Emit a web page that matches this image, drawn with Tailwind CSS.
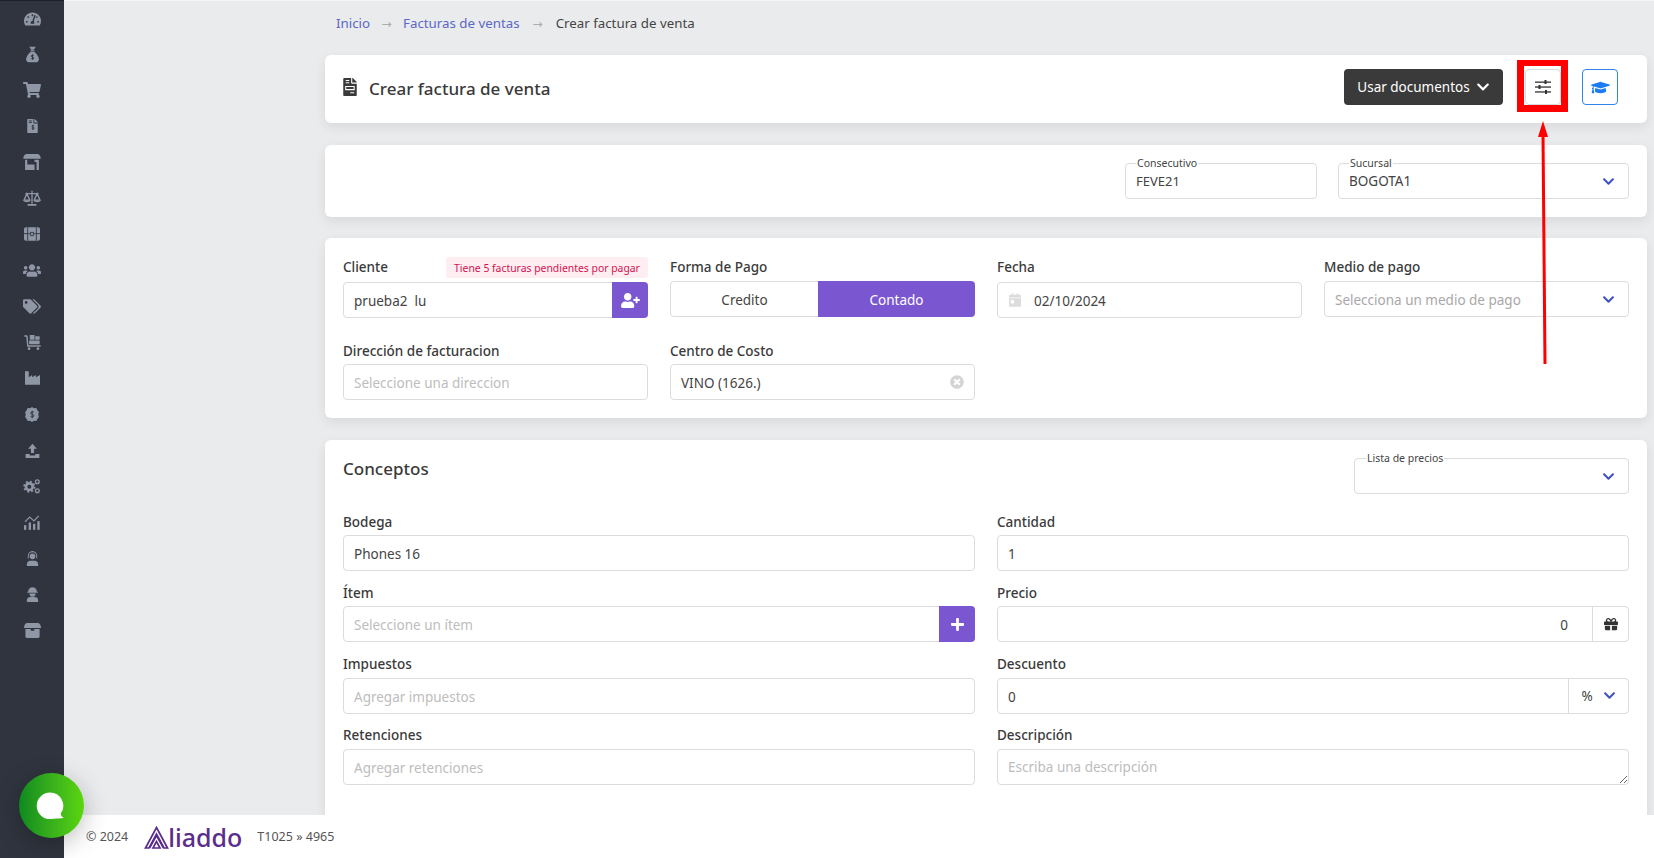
<!DOCTYPE html>
<html lang="es">
<head>
  <meta charset="UTF-8">
  <title>Crear factura de venta</title>
  <script src="https://cdn.jsdelivr.net/npm/@tailwindcss/browser@4"></script>
</head>
<body class="relative h-screen overflow-hidden flex bg-[#eaebed] text-[13.5px] text-[#444] font-['Noto_Sans',sans-serif]">

  <!-- sidebar -->
  <aside class="w-[64px] shrink-0 h-full bg-[#2f343e] text-[#8f97a6] border-t border-[#1d2027]">
    <div class="h-[35px] flex items-center justify-center"><svg class="w-[17px] h-[16px]" viewBox="0 0 576 512" fill="currentColor"><path d="M288 32C128.94 32 0 160.94 0 320c0 52.8 14.25 102.26 39.06 144.8 5.61 9.62 16.3 15.2 27.44 15.2h443c11.14 0 21.83-5.58 27.44-15.2C561.75 422.26 576 372.8 576 320c0-159.06-128.94-288-288-288zm0 64c14.71 0 26.58 10.13 30.32 23.65-1.11 2.26-2.64 4.23-3.45 6.67l-9.22 27.67c-5.13 3.49-10.97 6.01-17.64 6.01-17.67 0-32-14.33-32-32S270.33 96 288 96zM96 384c-17.67 0-32-14.33-32-32s14.33-32 32-32 32 14.33 32 32-14.33 32-32 32zm48-160c-17.67 0-32-14.33-32-32s14.33-32 32-32 32 14.33 32 32-14.33 32-32 32zm246.77-72.41l-61.33 184C343.13 347.33 352 364.54 352 384c0 11.72-3.38 22.55-8.88 32H232.88c-5.5-9.45-8.88-20.28-8.88-32 0-33.94 26.5-61.43 59.9-63.59l61.34-184.01c4.17-12.56 17.73-19.45 30.36-15.17 12.57 4.19 19.35 17.79 15.17 30.36zm14.66 57.2l15.52-46.55c3.47-1.29 7.13-2.23 11.05-2.23 17.67 0 32 14.33 32 32s-14.33 32-32 32c-11.38-.01-20.89-6.28-26.57-15.22zM480 384c-17.67 0-32-14.33-32-32s14.33-32 32-32 32 14.33 32 32-14.33 32-32 32z"/></svg></div>
    <div class="h-9 flex items-center justify-center"><svg class="w-[17px] h-[17px]" viewBox="0 0 24 24" fill="currentColor"><path d="M7.5 1h9l-2.6 4.2h-3.8z"/><rect x="9" y="6" width="6" height="1.6" rx=".6"/><path d="M9.6 8.6h4.8c3.2 2 6.6 6.6 6.6 10 0 2.9-2 4.4-4.4 4.4H7.4C5 23 3 21.500 3 18.600c0-3.400 3.400-8 6.600-10z"/><path d="M14 13.500c-.6-.8-3.800-1-3.800.8s3.800 1 3.800 2.800-3.300 1.500-4 .6M12 12v7.500" fill="none" stroke="#2f343e" stroke-width="1.300"/></svg></div>
    <div class="h-9 flex items-center justify-center"><svg class="w-[18px] h-[16px]" viewBox="0 0 576 512" fill="currentColor"><path d="M528.12 301.319l47.273-208C578.806 78.301 567.391 64 551.99 64H159.208l-9.166-44.81C147.758 8.021 137.93 0 126.529 0H24C10.745 0 0 10.745 0 24v16c0 13.255 10.745 24 24 24h69.883l70.248 343.435C147.325 417.1 136 435.222 136 456c0 30.928 25.072 56 56 56s56-25.072 56-56c0-15.674-6.447-29.835-16.824-40h209.647C430.447 426.165 424 440.326 424 456c0 30.928 25.072 56 56 56s56-25.072 56-56c0-22.172-12.888-41.332-31.579-50.405l5.517-24.276c3.413-15.018-8.002-29.319-23.403-29.319H218.117l-6.545-32h293.145c11.206 0 20.92-7.754 23.403-18.681z"/></svg></div>
    <div class="h-9 flex items-center justify-center"><svg class="w-[11px] h-[14px]" viewBox="0 0 384 512" fill="currentColor"><path d="M377 105L279.1 7c-4.500-4.500-10.600-7-17-7H256v128h128v-6.100c0-6.300-2.500-12.400-7-16.900zM224 136V0H24C10.700 0 0 10.700 0 24v464c0 13.300 10.700 24 24 24h336c13.300 0 24-10.700 24-24V160H248c-13.200 0-24-10.800-24-24z"/><path d="M256 250c-25-18-85-18-85 20s85 22 85 62-70 36-92 14M205 215v190M60 70h110M60 130h110" fill="none" stroke="#2f343e" stroke-width="32"/></svg></div>
    <div class="h-9 flex items-center justify-center"><svg class="w-[18px] h-[16px]" viewBox="0 0 24 22" fill="currentColor"><path d="M4 0h16c2 0 4 3 4 6.500H0C0 3 2 0 4 0z"/><path d="M2.500 8h3v6.500h10V8h6v14h-3.200V11h-2.800v11H2.500zM5.500 17h10v2.800h-10z"/></svg></div>
    <div class="h-9 flex items-center justify-center"><svg class="w-[18px] h-[16px]" viewBox="0 0 24 22" fill="none" stroke="currentColor" stroke-width="1.800"><path d="M12 1v18M3 5h18M5 5l-4 9h8zM19 5l-4 9h8z"/><path d="M0 14.500c1 3 9 3 10 0zM14 14.500c1 3 9 3 10 0z" fill="currentColor" stroke="none"/><path d="M6 20.500h12" stroke-width="2.500"/></svg></div>
    <div class="h-9 flex items-center justify-center"><svg class="w-[16px] h-[14px]" viewBox="0 0 24 20" fill="currentColor"><path d="M3 0h18c1.700 0 3 1.300 3 3v14c0 1.700-1.300 3-3 3H3c-1.700 0-3-1.300-3-3V3c0-1.700 1.300-3 3-3z"/><path d="M5.500 0v20M18.500 0v20M0 9.500h9.500M14.500 9.500H24" fill="none" stroke="#2f343e" stroke-width="1.300"/><rect x="10" y="7.500" width="4" height="5" fill="none" stroke="#2f343e" stroke-width="1.200"/></svg></div>
    <div class="h-9 flex items-center justify-center"><svg class="w-[18px] h-[15px]" viewBox="0 0 640 512" fill="currentColor"><path d="M96 224c35.300 0 64-28.700 64-64s-28.700-64-64-64-64 28.700-64 64 28.700 64 64 64zm448 0c35.300 0 64-28.700 64-64s-28.700-64-64-64-64 28.700-64 64 28.700 64 64 64zm32 32h-64c-17.600 0-33.500 7.100-45.100 18.600 40.300 22.100 68.900 62 75.100 109.400h66c17.700 0 32-14.300 32-32v-32c0-35.300-28.700-64-64-64zm-256 0c61.900 0 112-50.100 112-112S381.900 32 320 32 208 82.100 208 144s50.100 112 112 112zm76.800 32h-8.300c-20.800 10-43.900 16-68.500 16s-47.600-6-68.500-16h-8.300C179.600 288 128 339.600 128 403.200V432c0 26.500 21.500 48 48 48h288c26.500 0 48-21.500 48-48v-28.800c0-63.600-51.600-115.200-115.200-115.200zm-223.700-13.400C161.500 263.100 145.600 256 128 256H64c-35.300 0-64 28.700-64 64v32c0 17.700 14.300 32 32 32h65.900c6.300-47.400 34.900-87.300 75.200-109.400z"/></svg></div>
    <div class="h-9 flex items-center justify-center"><svg class="w-[18px] h-[15px]" viewBox="0 0 640 512" fill="currentColor"><path d="M497.941 225.941L286.059 14.059A48 48 0 0 0 252.118 0H48C21.490 0 0 21.490 0 48v204.118a48 48 0 0 0 14.059 33.941l211.882 211.882c18.744 18.745 49.136 18.746 67.882 0l204.118-204.118c18.745-18.745 18.745-49.137 0-67.882zM112 160c-26.510 0-48-21.490-48-48s21.490-48 48-48 48 21.490 48 48-21.490 48-48 48zm513.941 133.823L421.823 497.941c-18.745 18.745-49.137 18.745-67.882 0l-.36-.36L527.640 323.522c16.999-16.999 26.360-39.600 26.360-63.640s-9.362-46.641-26.360-63.640L331.397 0h48.721a48 48 0 0 1 33.941 14.059l211.882 211.882c18.745 18.745 18.745 49.137 0 67.882z"/></svg></div>
    <div class="h-9 flex items-center justify-center"><svg class="w-[17px] h-[15px]" viewBox="0 0 24 22" fill="currentColor"><path d="M0 .5h3.500c.8 0 1.300.5 1.500 1.200L6 15h18v2.200H4.200L2.800 2.700H0z"/><rect x="8" y="0" width="7" height="7" rx=".6"/><rect x="16" y="2" width="6.500" height="5" rx=".6"/><rect x="7" y="8" width="15.500" height="5.500" rx=".6"/><circle cx="7" cy="20" r="2"/><circle cx="20" cy="20" r="2"/></svg></div>
    <div class="h-9 flex items-center justify-center"><svg class="w-[15px] h-[14px]" viewBox="0 0 22 20" fill="currentColor"><path d="M0 0h5.500v9l5-3.500V9l5.500-3.500V9L22 5.500V20H0z"/></svg></div>
    <div class="h-9 flex items-center justify-center"><svg class="w-[14px] h-[15px]" viewBox="0 0 22 24" fill="currentColor"><path d="M11 0l3 2 4-.5 1.500 3.500 2.500 3-1 4 1 4-2.500 3-1.500 3.500-4-.5-3 2-3-2-4 .5L2.500 19 0 16l1-4-1-4 2.500-3L4 1.500 8 2z"/><path d="M14 8.500c-.7-1.300-5-1.500-5 1.200 0 2.700 5 1.500 5 4.300 0 2.600-4.400 2.300-5.300.9M11.300 6v12" fill="none" stroke="#2f343e" stroke-width="1.500"/></svg></div>
    <div class="h-9 flex items-center justify-center"><svg class="w-[15px] h-[15px]" viewBox="0 0 24 24" fill="currentColor"><path d="M12 1l7 8h-4.500v7h-5V9H5z"/><path d="M1 17.500h6.500v1.500c0 .6.500 1 1 1h7c.6 0 1-.4 1-1v-1.500H23V24H1z"/></svg></div>
    <div class="h-9 flex items-center justify-center"><svg class="w-[18px] h-[16px]" viewBox="0 0 26 24" fill="none" stroke="currentColor"><circle cx="9" cy="13" r="5" stroke-width="4"/><circle cx="9" cy="13" r="7.800" stroke-width="2.600" stroke-dasharray="3 3.100"/><circle cx="21" cy="5.500" r="2.800" stroke-width="2"/><circle cx="21" cy="19" r="2.800" stroke-width="2"/></svg></div>
    <div class="h-9 flex items-center justify-center"><svg class="w-[16px] h-[15px]" viewBox="0 0 24 22" fill="currentColor"><rect x="0" y="15" width="3.500" height="7"/><rect x="7" y="11" width="3.500" height="11"/><rect x="13.500" y="13" width="3.500" height="9"/><rect x="20" y="9" width="3.500" height="13"/><path d="M1.500 10L8.500 3l6.500 5.500L22 1" fill="none" stroke="currentColor" stroke-width="1.800"/></svg></div>
    <div class="h-9 flex items-center justify-center"><svg class="w-[13px] h-[15px]" viewBox="0 0 20 24" fill="currentColor"><path d="M10 0a8 8 0 0 1 7.500 8v4h-1.500V8A6 6 0 0 0 4 8v4H2.500V8A8 8 0 0 1 10 0z"/><circle cx="10" cy="8.500" r="4.500"/><path d="M1 24v-3c0-3 2.500-5.500 5.500-5.500h7c3 0 5.500 2.500 5.500 5.500v3z"/></svg></div>
    <div class="h-9 flex items-center justify-center"><svg class="w-[13px] h-[15px]" viewBox="0 0 20 24" fill="currentColor"><path d="M3 7.500a7 7 0 0 1 14 0h1.500v1.700h-17V7.500z"/><path d="M5 10.500h10a5 5 0 0 1-10 0z"/><path d="M1 24v-3c0-3 2.500-5 5.500-5h7c3 0 5.500 2 5.500 5v3z"/></svg></div>
    <div class="h-9 flex items-center justify-center"><svg class="w-[17px] h-[15px]" viewBox="0 0 24 21" fill="currentColor"><path d="M4 0h16c2 0 4 3 4 7H0C0 3 2 0 4 0z"/><path d="M2 8.500h7.500v2.500h5V8.500H22V19c0 1.200-.8 2-2 2H4c-1.200 0-2-.8-2-2z"/></svg></div>
  </aside>

  <main class="flex-1 min-w-0 h-full flex flex-col">
    <div class="flex-1 min-h-0 overflow-hidden pl-[261px] pr-[7px] border-t border-[#f5f5f6]">
      <!-- breadcrumb -->
      <nav class="h-[45px] mb-[9px] flex items-center text-[13.3px]">
        <a class="text-[#5a68c6] ml-[11px]">Inicio</a>
        <span class="text-[#a9abb0] mx-[11.5px] text-[12px] font-['DejaVu_Sans',sans-serif]">→</span>
        <a class="text-[#5a68c6]">Facturas de ventas</a>
        <span class="text-[#a9abb0] mx-[13px] text-[12px] font-['DejaVu_Sans',sans-serif]">→</span>
        <span class="text-[#444]">Crear factura de venta</span>
      </nav>

      <!-- title card -->
      <section class="h-[68px] bg-white rounded-[6px] shadow-[0_4px_12px_rgba(0,0,0,0.08)] pl-[18px] pr-[29px] flex items-center justify-between">
        <div class="flex items-center">
          <svg class="w-[14px] h-[18px] mr-[12px] mb-[4px]" viewBox="0 0 384 512" fill="#3a3a3a"><path d="M377 105L279.100 7c-4.500-4.500-10.600-7-17-7H256v128h128v-6.100c0-6.300-2.500-12.400-7-16.900zM224 136V0H24C10.700 0 0 10.700 0 24v464c0 13.300 10.700 24 24 24h336c13.300 0 24-10.700 24-24V160H248c-13.200 0-24-10.800-24-24z"/><path d="M70 70h100M70 135h100M70 240h240v90H70zM200 420h110" fill="none" stroke="#fff" stroke-width="30"/></svg>
          <h1 class="text-[17px] font-medium text-[#3a3a3a]">Crear factura de venta</h1>
        </div>
        <div class="flex items-center mb-[4px]">
          <button class="w-[159px] h-[36px] rounded-[4px] bg-[#3a3a3a] text-white flex items-center justify-center gap-[6px]">Usar documentos
            <svg class="w-[14px] h-[14px]" viewBox="0 0 448 512" fill="currentColor"><path d="M207.029 381.476L12.686 187.132c-9.373-9.373-9.373-24.569 0-33.941l22.667-22.667c9.357-9.357 24.522-9.375 33.901-.04L224 284.505l154.745-154.021c9.379-9.335 24.544-9.317 33.901.04l22.667 22.667c9.373 9.373 9.373 24.569 0 33.941L240.971 381.476c-9.373 9.372-24.569 9.372-33.942 0z"/></svg>
          </button>
          <div class="relative ml-[22px]">
            <button class="w-[36px] h-[36px] rounded-[4px] border border-[#d9d9d9] bg-white flex items-center justify-center">
              <svg class="w-[16px] h-[14px]" viewBox="0 0 16 14" fill="#333"><rect x="0" y="1.500" width="16" height="1.300"/><rect x="9.500" y="0" width="2" height="4"/><rect x="0" y="6.400" width="16" height="1.300"/><rect x="3.500" y="5" width="2" height="4"/><rect x="0" y="11.300" width="16" height="1.300"/><rect x="10" y="10" width="2" height="4"/></svg>
            </button>
            <div class="absolute -left-[8px] -top-[9px] w-[51px] h-[52px] border-x-[7px] border-t-[6px] border-b-[7px] border-[#f00]"></div>
          </div>
          <button class="ml-[21px] w-[36px] h-[36px] rounded-[4px] border border-[#2b86f0] bg-white flex items-center justify-center">
            <svg class="w-[19px] h-[15px]" viewBox="0 0 640 512" fill="#1d7cf2"><path d="M622.340 153.200L343.400 67.500c-15.200-4.670-31.600-4.670-46.790 0L17.660 153.200c-23.540 7.230-23.540 38.360 0 45.590l48.630 14.940c-10.670 13.190-17.230 29.280-17.880 46.900C38.780 266.150 32 276.110 32 288c0 10.780 5.680 19.850 13.860 25.650L20.330 428.530C18.110 438.520 25.710 448 35.940 448h56.110c10.240 0 17.840-9.480 15.620-19.470L82.140 313.650C90.320 307.850 96 298.780 96 288c0-11.570-6.470-21.250-15.660-26.870.76-15.020 8.440-28.300 20.690-36.720L296.600 284.500c9.060 2.780 26.440 6.250 46.790 0l278.950-85.700c23.550-7.240 23.550-38.360 0-45.600zM352.790 315.090c-28.530 8.760-52.840 3.920-65.590 0l-145.020-44.550L128 384c0 35.350 85.960 64 192 64s192-28.650 192-64l-14.180-113.470-145.030 44.560z"/></svg>
          </button>
        </div>
      </section>

      <!-- consecutivo / sucursal -->
      <section class="mt-[22px] h-[72px] bg-white rounded-[6px] shadow-[0_4px_12px_rgba(0,0,0,0.08)] px-[18px] flex items-center justify-end gap-[21px]">
        <div class="relative w-[192px] h-[36px] rounded-[4px] border border-[#dcdcdc] flex items-center px-[10px]">
          <span class="absolute left-[10px] -top-[8px] bg-white px-[1px] text-[10.5px] leading-[14px] text-[#444]">Consecutivo</span>
          <span class="text-[13px] mt-[1px]">FEVE21</span>
        </div>
        <div class="relative w-[291px] h-[36px] rounded-[4px] border border-[#dcdcdc] flex items-center justify-between pl-[10px] pr-[13px]">
          <span class="absolute left-[10px] -top-[8px] bg-white px-[1px] text-[10.5px] leading-[14px] text-[#444]">Sucursal</span>
          <span>BOGOTA1</span>
          <svg class="w-[13px] h-[13px] text-[#3f51c5]" viewBox="0 0 448 512" fill="currentColor"><path d="M207.029 381.476L12.686 187.132c-9.373-9.373-9.373-24.569 0-33.941l22.667-22.667c9.357-9.357 24.522-9.375 33.901-.04L224 284.505l154.745-154.021c9.379-9.335 24.544-9.317 33.901.04l22.667 22.667c9.373 9.373 9.373 24.569 0 33.941L240.971 381.476c-9.373 9.372-24.569 9.372-33.942 0z"/></svg>
        </div>
      </section>

      <!-- cliente -->
      <section class="mt-[21px] h-[180px] bg-white rounded-[6px] shadow-[0_4px_12px_rgba(0,0,0,0.08)] px-[18px] pt-[19px]">
        <div class="grid grid-cols-4 gap-x-[22px]">
          <div>
            <div class="relative h-[20px] mb-[5px] leading-[20px] font-medium text-[#3a3a3a]">Cliente
              <span class="absolute right-0 top-0 h-[21px] w-[202px] rounded-[3px] bg-[#feeef2] text-[#d5124f] text-[10.4px] font-normal flex items-center justify-center">Tiene 5 facturas pendientes por pagar</span>
            </div>
            <div class="h-[36px] flex rounded-[4px] border border-[#dcdcdc]">
              <input class="flex-1 min-w-0 px-[10px] pt-[2px] outline-none" value="prueba2&nbsp; lu">
              <button class="w-[36px] -my-px -mr-px rounded-r-[4px] bg-[#7a57d1] flex items-center justify-center"><svg class="w-[19px] h-[15px]" viewBox="0 0 640 512" fill="#fff"><path d="M624 208h-64v-64c0-8.800-7.200-16-16-16h-32c-8.800 0-16 7.200-16 16v64h-64c-8.800 0-16 7.200-16 16v32c0 8.800 7.200 16 16 16h64v64c0 8.800 7.200 16 16 16h32c8.800 0 16-7.200 16-16v-64h64c8.800 0 16-7.200 16-16v-32c0-8.800-7.200-16-16-16zm-400 48c70.700 0 128-57.300 128-128S294.700 0 224 0 96 57.300 96 128s57.300 128 128 128zm89.600 32h-16.700c-22.200 10.200-46.900 16-72.900 16s-50.600-5.800-72.900-16h-16.700C60.200 288 0 348.200 0 422.400V464c0 26.500 21.500 48 48 48h352c26.500 0 48-21.500 48-48v-41.600c0-74.200-60.200-134.400-134.400-134.400z"/></svg></button>
            </div>
          </div>
          <div>
            <div class="h-[20px] mb-[4px] leading-[20px] font-medium text-[#3a3a3a]">Forma de Pago</div>
            <div class="h-[36px] flex rounded-[4px] overflow-hidden">
              <div class="w-[148px] border border-r-0 border-[#dcdcdc] rounded-l-[4px] pt-[2px] flex items-center justify-center">Credito</div>
              <div class="flex-1 bg-[#7a57d1] text-white pt-[2px] flex items-center justify-center">Contado</div>
            </div>
          </div>
          <div>
            <div class="h-[20px] mb-[5px] leading-[20px] font-medium text-[#3a3a3a]">Fecha</div>
            <div class="h-[36px] flex items-center rounded-[4px] border border-[#dcdcdc] pl-[11px]">
              <svg class="w-[12px] h-[14px] mr-[13px]" viewBox="0 0 448 512" fill="#dcdcdc"><path d="M0 464c0 26.500 21.500 48 48 48h352c26.500 0 48-21.500 48-48V192H0v272zm64-192c0-8.800 7.200-16 16-16h96c8.800 0 16 7.200 16 16v96c0 8.800-7.200 16-16 16H80c-8.800 0-16-7.200-16-16v-96zM400 64h-48V16c0-8.800-7.200-16-16-16h-32c-8.800 0-16 7.200-16 16v48H160V16c0-8.800-7.200-16-16-16h-32c-8.800 0-16 7.200-16 16v48H48C21.500 64 0 85.500 0 112v48h448v-48c0-26.500-21.500-48-48-48z"/></svg>
              <input class="flex-1 min-w-0 pt-[2px] outline-none" value="02/10/2024">
            </div>
          </div>
          <div>
            <div class="h-[20px] mb-[4px] leading-[20px] font-medium text-[#3a3a3a]">Medio de pago</div>
            <div class="h-[36px] flex items-center justify-between rounded-[4px] border border-[#dcdcdc] pl-[10px] pr-[13px] text-[#a8a8a8]"><span class="mt-[2px]">Selecciona un medio de pago</span>
              <svg class="w-[13px] h-[13px] text-[#3f51c5]" viewBox="0 0 448 512" fill="currentColor"><path d="M207.029 381.476L12.686 187.132c-9.373-9.373-9.373-24.569 0-33.941l22.667-22.667c9.357-9.357 24.522-9.375 33.901-.04L224 284.505l154.745-154.021c9.379-9.335 24.544-9.317 33.901.04l22.667 22.667c9.373 9.373 9.373 24.569 0 33.941L240.971 381.476c-9.373 9.372-24.569 9.372-33.942 0z"/></svg>
            </div>
          </div>
        </div>
        <div class="mt-[23px] grid grid-cols-4 gap-x-[22px]">
          <div>
            <div class="h-[20px] mb-[3px] leading-[20px] font-medium text-[#3a3a3a]">Dirección de facturacion</div>
            <input class="w-full h-[36px] rounded-[4px] border border-[#dcdcdc] px-[10px] pt-[2px] outline-none placeholder:text-[#bdbdbd]" placeholder="Seleccione una direccion">
          </div>
          <div>
            <div class="h-[20px] mb-[3px] leading-[20px] font-medium text-[#3a3a3a]">Centro de Costo</div>
            <div class="h-[36px] flex items-center rounded-[4px] border border-[#dcdcdc] pl-[10px] pr-[10px]">
              <input class="flex-1 min-w-0 pt-[2px] outline-none" value="VINO (1626.)">
              <svg class="w-[14px] h-[14px]" viewBox="0 0 512 512" fill="#d4d4d4"><path d="M256 8C119 8 8 119 8 256s111 248 248 248 248-111 248-248S393 8 256 8zm121.600 313.100c4.700 4.700 4.700 12.300 0 17L338 377.600c-4.700 4.700-12.300 4.700-17 0L256 312l-65.100 65.600c-4.700 4.700-12.300 4.700-17 0L134.400 338c-4.700-4.700-4.700-12.300 0-17l65.600-65-65.600-65.100c-4.700-4.700-4.700-12.300 0-17l39.600-39.600c4.700-4.700 12.300-4.700 17 0l65 65.700 65.100-65.600c4.700-4.700 12.300-4.700 17 0l39.600 39.600c4.700 4.700 4.700 12.300 0 17L312 256l65.600 65.100z"/></svg>
            </div>
          </div>
        </div>
      </section>

      <!-- conceptos -->
      <section class="mt-[22px] h-[500px] bg-white rounded-[6px] shadow-[0_4px_12px_rgba(0,0,0,0.08)] px-[18px] pt-[18px]">
        <div class="flex justify-between">
          <h2 class="text-[17px] font-medium text-[#3a3a3a] leading-[22px]">Conceptos</h2>
          <div class="relative w-[275px] h-[36px] rounded-[4px] border border-[#dcdcdc] flex items-center justify-end pr-[13px]">
            <span class="absolute left-[11px] -top-[8px] bg-white px-[1px] text-[10.5px] leading-[14px] text-[#444]">Lista de precios</span>
            <svg class="w-[13px] h-[13px] text-[#3f51c5]" viewBox="0 0 448 512" fill="currentColor"><path d="M207.029 381.476L12.686 187.132c-9.373-9.373-9.373-24.569 0-33.941l22.667-22.667c9.357-9.357 24.522-9.375 33.901-.04L224 284.505l154.745-154.021c9.379-9.335 24.544-9.317 33.901.04l22.667 22.667c9.373 9.373 9.373 24.569 0 33.941L240.971 381.476c-9.373 9.372-24.569 9.372-33.942 0z"/></svg>
          </div>
        </div>
        <div class="mt-[18px] grid grid-cols-2 gap-x-[22px] gap-y-[12.33px]">
          <div>
            <div class="h-[20px] mb-[3px] leading-[20px] font-medium text-[#3a3a3a]">Bodega</div>
            <input class="w-full h-[36px] rounded-[4px] border border-[#dcdcdc] px-[10px] pt-[2px] outline-none" value="Phones 16">
          </div>
          <div>
            <div class="h-[20px] mb-[3px] leading-[20px] font-medium text-[#3a3a3a]">Cantidad</div>
            <input class="w-full h-[36px] rounded-[4px] border border-[#dcdcdc] px-[10px] pt-[2px] outline-none" value="1">
          </div>
          <div>
            <div class="h-[20px] mb-[3px] leading-[20px] font-medium text-[#3a3a3a]">Ítem</div>
            <div class="h-[36px] flex rounded-[4px] border border-[#dcdcdc]">
              <input class="flex-1 min-w-0 px-[10px] pt-[2px] outline-none placeholder:text-[#bdbdbd]" placeholder="Seleccione un ítem">
              <button class="w-[36px] -my-px -mr-px rounded-r-[4px] bg-[#7a57d1] flex items-center justify-center"><svg class="w-[13px] h-[15px]" viewBox="0 0 448 512" fill="#fff"><path d="M416 208H272V64c0-17.670-14.330-32-32-32h-32c-17.670 0-32 14.330-32 32v144H32c-17.670 0-32 14.330-32 32v32c0 17.670 14.330 32 32 32h144v144c0 17.670 14.330 32 32 32h32c17.670 0 32-14.330 32-32V304h144c17.670 0 32-14.330 32-32v-32c0-17.670-14.330-32-32-32z"/></svg></button>
            </div>
          </div>
          <div>
            <div class="h-[20px] mb-[3px] leading-[20px] font-medium text-[#3a3a3a]">Precio</div>
            <div class="h-[36px] flex rounded-[4px] border border-[#dcdcdc]">
              <input class="flex-1 min-w-0 px-[24px] pt-[2px] text-right outline-none" value="0">
              <div class="w-[36px] border-l border-[#dcdcdc] flex items-center justify-center"><svg class="w-[14px] h-[14px]" viewBox="0 0 512 512" fill="#333"><path d="M32 448c0 17.700 14.300 32 32 32h160V320H32v128zm256 32h160c17.700 0 32-14.300 32-32V320H288v160zm192-320h-42.100c6.200-12.100 10.100-25.500 10.100-40 0-48.500-39.500-88-88-88-41.600 0-68.500 21.300-103 68.300-34.500-47-61.400-68.300-103-68.300-48.500 0-88 39.500-88 88 0 14.500 3.800 27.900 10.100 40H32c-17.700 0-32 14.300-32 32v80c0 8.800 7.200 16 16 16h480c8.800 0 16-7.200 16-16v-80c0-17.700-14.300-32-32-32zm-326.100 0c-22.100 0-40-17.900-40-40s17.900-40 40-40c19.900 0 34.600 3.300 86.100 80h-86.100zm206.100 0h-86.100c51.400-76.500 65.700-80 86.100-80 22.100 0 40 17.900 40 40s-17.900 40-40 40z"/></svg></div>
            </div>
          </div>
          <div>
            <div class="h-[20px] mb-[3px] leading-[18px] font-medium text-[#3a3a3a]">Impuestos</div>
            <input class="w-full h-[36px] rounded-[4px] border border-[#dcdcdc] px-[10px] pt-[2px] outline-none placeholder:text-[#bdbdbd]" placeholder="Agregar impuestos">
          </div>
          <div>
            <div class="h-[20px] mb-[3px] leading-[18px] font-medium text-[#3a3a3a]">Descuento</div>
            <div class="h-[36px] flex rounded-[4px] border border-[#dcdcdc]">
              <input class="flex-1 min-w-0 px-[10px] pt-[2px] outline-none" value="0">
              <div class="w-[60px] border-l border-[#dcdcdc] flex items-center justify-center gap-[10px]">%
                <svg class="w-[13px] h-[13px] text-[#3f51c5]" viewBox="0 0 448 512" fill="currentColor"><path d="M207.029 381.476L12.686 187.132c-9.373-9.373-9.373-24.569 0-33.941l22.667-22.667c9.357-9.357 24.522-9.375 33.901-.04L224 284.505l154.745-154.021c9.379-9.335 24.544-9.317 33.901.04l22.667 22.667c9.373 9.373 9.373 24.569 0 33.941L240.971 381.476c-9.373 9.372-24.569 9.372-33.942 0z"/></svg>
              </div>
            </div>
          </div>
          <div>
            <div class="h-[20px] mb-[3px] leading-[18px] font-medium text-[#3a3a3a]">Retenciones</div>
            <input class="w-full h-[36px] rounded-[4px] border border-[#dcdcdc] px-[10px] pt-[2px] outline-none placeholder:text-[#bdbdbd]" placeholder="Agregar retenciones">
          </div>
          <div>
            <div class="h-[20px] mb-[3px] leading-[18px] font-medium text-[#3a3a3a]">Descripción</div>
            <textarea class="block w-full h-[36px] rounded-[4px] border border-[#dcdcdc] px-[10px] py-[7px] outline-none placeholder:text-[#bdbdbd]" placeholder="Escriba una descripción"></textarea>
          </div>
        </div>
      </section>
    </div>

    <!-- footer -->
    <footer class="h-[43px] shrink-0 bg-white flex items-center pl-[22px] pt-[2px] text-[12.5px] text-[#555]">
      <span>© 2024</span>
      <div class="ml-[16px] flex items-center text-[#5a2d8c]">
        <svg class="w-[25px] h-[23px]" viewBox="0 0 25 23" fill="none" stroke="currentColor" stroke-width="1.700"><path d="M12.500 1.500L23.500 22H20L12.500 8 5 22H1.500z"/><path d="M5.500 22L12.500 9.500 19.500 22"/><path d="M9 22l3.500-6.500L16 22z"/></svg>
        <span class="ml-[-1px] text-[25px] leading-none font-medium text-[#5a2d8c]">liaddo</span>
      </div>
      <span class="ml-[15px]">T1025 » 4965</span>
    </footer>
  </main>

  <!-- chat launcher -->
  <button class="absolute left-[19px] top-[773px] w-[65px] h-[65px] rounded-full bg-gradient-to-r from-[#0a8a1f] to-[#5ad70c] shadow-[0_6px_24px_rgba(0,0,0,0.25)] flex items-center justify-center">
    <svg class="w-[30px] h-[30px] -ml-[3px]" viewBox="0 0 30 30" fill="#fff"><path d="M15 1.500a13.300 13.300 0 1 0 0 26.600c2.500 0 5-.3 14-1-2-1-3-2.500-3.300-4.500A13.300 13.300 0 0 0 15 1.500z"/></svg>
  </button>

  <!-- annotation arrow -->
  <svg class="absolute left-[1530px] top-[120px] w-[26px] h-[246px] pointer-events-none" viewBox="0 0 26 246">
    <path d="M13 1l5 16H8z" fill="#f00"/>
    <path d="M13 14l2 230" stroke="#f00" stroke-width="3" fill="none"/>
  </svg>

</body>
</html>
